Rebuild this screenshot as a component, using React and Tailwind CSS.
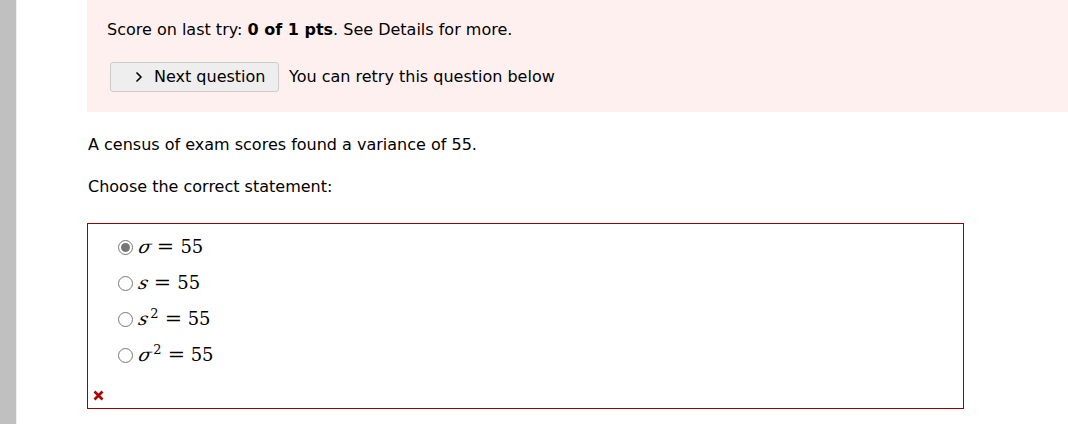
import React from 'react';

const choices = [
  { base: 'σ', sup: null, checked: true },
  { base: 's', sup: null },
  { base: 's', sup: '2' },
  { base: 'σ', sup: '2' },
];

const Radio = ({ checked }) => (
  <span className="inline-flex w-[15px] h-[15px] rounded-full border border-[#777] bg-white items-center justify-center mr-[6px] shrink-0">
    {checked && <span className="w-[9px] h-[9px] rounded-full bg-[#777]" />}
  </span>
);

export default function App() {
  return (
    <div className="flex w-[1068px] h-[424px] bg-white text-black overflow-hidden font-['DejaVu_Sans',sans-serif]">
      <div className="w-[17px] bg-[#c0c0c0] border-r border-[#eeeeee] shrink-0" />
      <div className="flex-1 pl-[70px]">
        <div className="bg-[#fff0f0] h-[112px] pl-[20px] pt-[18px] text-[16px]">
          <div className="leading-[24px]">
            Score on last try: <b className="font-bold">0 of 1 pts</b>. See Details for more.
          </div>
          <div className="flex items-center mt-[20px] ml-[3px]">
            <button className="h-[30px] w-[169px] pl-[24px] bg-[#eeeeee] border border-[#cccccc] rounded-[3px] text-[16px] flex items-center">
              <svg width="8" height="12" viewBox="0 0 8 12" className="mr-[11px]">
                <path d="M1.5 1.5 L6 6 L1.5 10.5" fill="none" stroke="#000" strokeWidth="1.6" />
              </svg>
              Next question
            </button>
            <span className="ml-[10px]">You can retry this question below</span>
          </div>
        </div>
        <p className="mt-[21px] text-[16px] leading-[24px] ml-[1px]">A census of exam scores found a variance of 55.</p>
        <p className="mt-[18px] text-[16px] leading-[24px] ml-[1px]">Choose the correct statement:</p>
        <div className="mt-[24px] w-[877px] h-[186px] border border-[#990000] pl-[30px] pt-[12px] relative">
          <div className="flex flex-col gap-[14px]">
            {choices.map((c, i) => (
              <label key={i} className="flex items-center h-[22px]">
                <Radio checked={c.checked} />
                <span className="text-[18px] leading-none whitespace-nowrap flex items-baseline font-['DejaVu_Serif',serif]">
                  <span className="italic inline-block -skew-x-[14deg]">{c.base}</span>
                  {c.sup && <span className="text-[13px] relative -top-[7px] ml-[2px]">{c.sup}</span>}
                  <span className="inline-block mx-[7px] scale-x-[1.15]">=</span>
                  <span>55</span>
                </span>
              </label>
            ))}
          </div>
          <svg width="11" height="11" viewBox="0 0 11 11" className="absolute left-[5px] bottom-[7px]">
            <path d="M1.5 1.5 L9.5 9.5 M9.5 1.5 L1.5 9.5" stroke="#b00000" strokeWidth="2.6" />
          </svg>
        </div>
      </div>
    </div>
  );
}
